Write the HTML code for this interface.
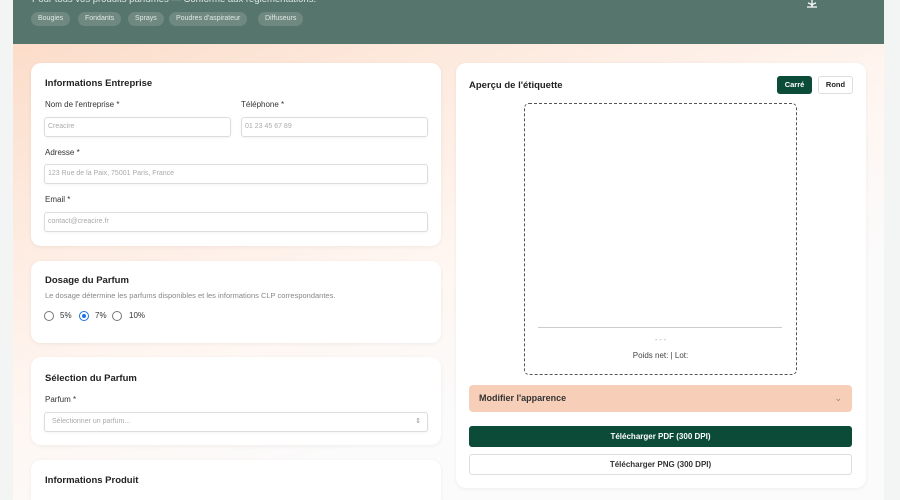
<!DOCTYPE html>
<html><head><meta charset="utf-8"><style>
*{box-sizing:border-box;margin:0;padding:0}
html{width:900px;height:500px;overflow:hidden}
body{width:900px;height:500px;overflow:hidden;background:#f3f4f4;font-family:"Liberation Sans",sans-serif;position:relative;color:#222}
.main{position:absolute;left:13px;top:0;width:871px;height:500px;background:linear-gradient(160deg,#fbd9c4 0%,#fde9dd 25%,#fff6f1 50%,#fbfbfb 70%);}
.hdr{position:absolute;left:13px;top:0;width:871px;height:44px;background:#56756c}
.a{position:absolute}
.card{position:absolute;background:#fff;border-radius:10px;box-shadow:0 1px 4px rgba(0,0,0,.06)}
.pill{position:absolute;top:12px;height:14px;border-radius:7px;background:rgba(255,255,255,.15);color:#dfe8e4;font-size:7px;line-height:14px;padding:0 7px}
.t{position:absolute;font-size:9.5px;font-weight:bold;color:#222}
.l{position:absolute;font-size:8px;color:#333}
.in{position:absolute;height:20px;border:1px solid #dcdcdc;border-radius:3px;font-size:7px;color:#aaa;line-height:18px;padding-left:3px;box-shadow:0 1px 2px rgba(0,0,0,.05)}
.radio{position:absolute;top:311px;width:10px;height:10px;border:1px solid #777;border-radius:50%}
</style></head><body>
<div class="main"></div>
<div class="hdr"></div>
<div class="a" style="left:32px;top:-6px;font-size:9.5px;color:#dfe8e4">Pour tous vos produits parfumés — Conforme aux réglementations.</div>
<div class="pill" style="left:31px">Bougies</div>
<div class="pill" style="left:78px">Fondants</div>
<div class="pill" style="left:128px">Sprays</div>
<div class="pill" style="left:169px">Poudres d'aspirateur</div>
<div class="pill" style="left:258px">Diffuseurs</div>
<svg class="a" style="left:804px;top:0" width="16" height="9"><path d="M8 0V7M3 7H13M4 3Q8 4 8 6M12 3Q8 4 8 6" stroke="#fff" stroke-width="1.2" fill="none"/></svg>

<div class="card" style="left:31px;top:63px;width:410px;height:183px"></div>
<div class="t" style="left:45px;top:78px">Informations Entreprise</div>
<div class="l" style="left:45px;top:100px">Nom de l'entreprise *</div>
<div class="l" style="left:241px;top:100px">Téléphone *</div>
<div class="in" style="left:44px;top:117px;width:187px">Creacire</div>
<div class="in" style="left:241px;top:117px;width:187px">01 23 45 67 89</div>
<div class="l" style="left:45px;top:148px">Adresse *</div>
<div class="in" style="left:44px;top:164px;width:384px">123 Rue de la Paix, 75001 Paris, France</div>
<div class="l" style="left:45px;top:195px">Email *</div>
<div class="in" style="left:44px;top:212px;width:384px">contact@creacire.fr</div>

<div class="card" style="left:31px;top:261px;width:410px;height:82px"></div>
<div class="t" style="left:45px;top:275px">Dosage du Parfum</div>
<div class="a" style="left:45px;top:291px;font-size:7.5px;color:#888">Le dosage détermine les parfums disponibles et les informations CLP correspondantes.</div>
<div class="radio" style="left:44px"></div><div class="l" style="left:60px;top:311px">5%</div>
<div class="radio" style="left:79px;border-color:#1a73e8"><div style="position:absolute;left:2px;top:2px;width:4px;height:4px;border-radius:50%;background:#1a73e8"></div></div><div class="l" style="left:95px;top:311px">7%</div>
<div class="radio" style="left:112px"></div><div class="l" style="left:129px;top:311px">10%</div>

<div class="card" style="left:31px;top:357px;width:410px;height:88px"></div>
<div class="t" style="left:45px;top:373px">Sélection du Parfum</div>
<div class="l" style="left:45px;top:395px">Parfum *</div>
<div class="in" style="left:44px;top:412px;width:384px;padding-left:7px">Sélectionner un parfum...<span style="position:absolute;right:6px;top:0;color:#999">⇕</span></div>

<div class="card" style="left:31px;top:460px;width:410px;height:40px;border-radius:10px 10px 0 0"></div>
<div class="t" style="left:45px;top:475px">Informations Produit</div>

<div class="card" style="left:456px;top:63px;width:410px;height:425px"></div>
<div class="t" style="left:469px;top:80px">Aperçu de l'étiquette</div>
<div class="a" style="left:777px;top:76px;width:35px;height:18px;background:#0b4b38;color:#fff;border-radius:3px;font-size:7.5px;font-weight:bold;text-align:center;line-height:18px">Carré</div>
<div class="a" style="left:818px;top:76px;width:35px;height:18px;border:1px solid #ddd;border-radius:3px;font-size:7.5px;font-weight:bold;text-align:center;line-height:16px">Rond</div>
<div class="a" style="left:524px;top:103px;width:273px;height:272px;border:1px dashed #555;border-radius:5px"></div>
<div class="a" style="left:538px;top:327px;width:244px;height:1px;background:#ccc"></div>
<div class="a" style="left:524px;top:337px;width:273px;text-align:center;font-size:7px;color:#999">- - -</div>
<div class="a" style="left:524px;top:351px;width:273px;text-align:center;font-size:8px;color:#444">Poids net: | Lot:</div>
<div class="a" style="left:469px;top:385px;width:383px;height:27px;background:#f7cfb8;border-radius:4px;font-size:9px;font-weight:bold;color:#333;line-height:27px;padding-left:10px">Modifier l'apparence<span style="position:absolute;right:10px;color:#888;font-weight:normal">⌄</span></div>
<div class="a" style="left:469px;top:426px;width:383px;height:21px;background:#0b4b38;border-radius:3px;color:#fff;font-size:8px;font-weight:bold;text-align:center;line-height:21px">Télécharger PDF (300 DPI)</div>
<div class="a" style="left:469px;top:454px;width:383px;height:21px;border:1px solid #ddd;border-radius:3px;font-size:8px;font-weight:bold;text-align:center;line-height:19px;color:#333">Télécharger PNG (300 DPI)</div>
</body></html>
